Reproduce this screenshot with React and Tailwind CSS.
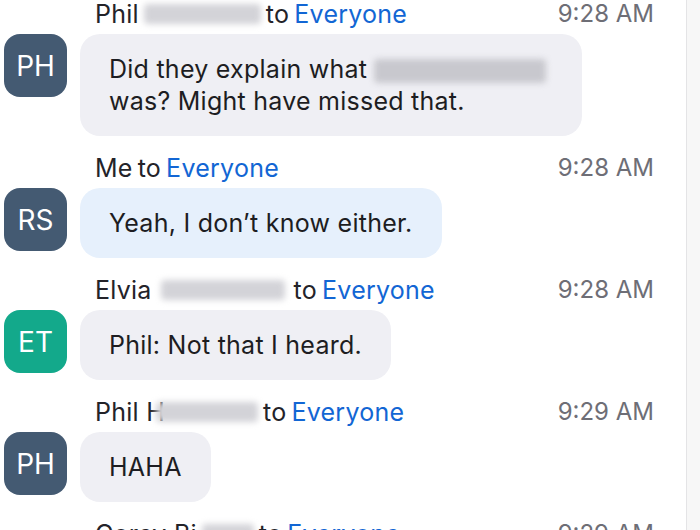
import React from 'react';

const Blur = ({ w, h = 20, tone = 'bg-[#d3d3d8]', className = '' }) => (
  <span
    className={`inline-block align-middle rounded-[4px] blur-[3px] ${tone} ${className}`}
    style={{ width: w, height: h }}
  />
);

const messages = [
  {
    initials: 'PH',
    avatar: 'bg-[#445a72]',
    name: <><span>Phil</span><Blur w={117} /></>,
    time: '9:28 AM',
    bubble: 'bg-[#efeff4]',
    body: (
      <>
        Did they explain what <Blur w={172} h={24} tone="bg-[#c8c8ce]" className="mr-[7px]" />
        <br />
        was? Might have missed that.
      </>
    ),
  },
  {
    initials: 'RS',
    avatar: 'bg-[#445a72]',
    name: <span>Me</span>,
    time: '9:28 AM',
    bubble: 'bg-[#e6f0fc]',
    body: <>Yeah, I don’t know either.</>,
  },
  {
    initials: 'ET',
    avatar: 'bg-[#13a98b]',
    name: <><span className="mr-[4px]">Elvia</span><Blur w={124} className="mr-[4px]" /></>,
    time: '9:28 AM',
    bubble: 'bg-[#efeff4]',
    body: <>Phil: Not that I heard.</>,
  },
  {
    initials: 'PH',
    avatar: 'bg-[#445a72]',
    name: <><span>Phil H</span><Blur w={102} className="-ml-[14px]" /></>,
    time: '9:29 AM',
    bubble: 'bg-[#efeff4]',
    body: <>HAHA</>,
  },
  {
    initials: 'CB',
    avatar: 'bg-[#445a72]',
    name: <><span>Corey Bi</span><Blur w={52} /></>,
    time: '9:29 AM',
    bubble: 'bg-[#efeff4]',
    body: <>ok</>,
  },
];

const Message = ({ m }) => (
  <div className="mb-[18px]">
    {/* sender line */}
    <div className="flex items-center justify-between pl-[95px] pr-[32px] h-[28px] leading-[28px]">
      <div className="flex items-center gap-[5px] whitespace-nowrap text-[#232329] text-[25px] tracking-[0.25px]">
        {m.name}
        <span>to</span>
        <span className="text-[#1266d4]">Everyone</span>
      </div>
      <span className="text-[#6e6e76] text-[24px]">{m.time}</span>
    </div>
    {/* avatar + bubble */}
    <div className="flex items-start gap-[13px] pl-[4px] mt-[6px]">
      <div
        className={`w-[63px] h-[63px] shrink-0 rounded-[16px] ${m.avatar} flex items-center justify-center text-white text-[28px]`}
      >
        {m.initials}
      </div>
      <div
        className={`${m.bubble} rounded-[20px] px-[29px] py-[19px] leading-[32px] text-[25px] tracking-[0.25px] text-[#1d1d22] whitespace-nowrap`}
      >
        {m.body}
      </div>
    </div>
  </div>
);

export default function App() {
  return (
    <div
      className="w-[700px] h-[530px] overflow-hidden bg-white flex"
      style={{ fontFamily: 'Inter, "Noto Sans", sans-serif' }}
    >
      <div className="flex-1">
        {messages.map((m, i) => (
          <Message key={i} m={m} />
        ))}
      </div>
      {/* scrollbar track */}
      <div className="w-[14px] h-full bg-[#f7f7f7] border-l border-[#e4e4e6]" />
    </div>
  );
}
